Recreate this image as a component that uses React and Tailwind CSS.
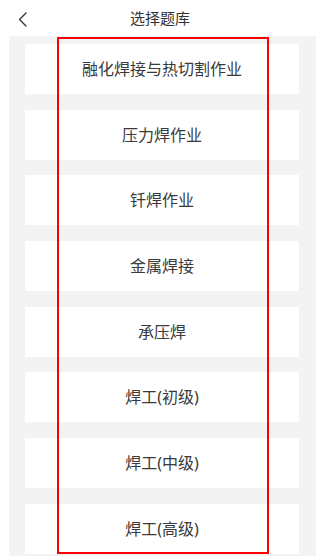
import React from "react";

const items = [
  "融化焊接与热切割作业",
  "压力焊作业",
  "钎焊作业",
  "金属焊接",
  "承压焊",
  "焊工(初级)",
  "焊工(中级)",
  "焊工(高级)",
];

export default function App() {
  return (
    <div
      className="relative w-[320px] h-[556px] overflow-hidden bg-white"
      style={{ fontFamily: '"Noto Sans", "Noto Sans CJK SC", sans-serif' }}
    >
      <div className="relative h-[36px] flex items-center justify-center">
        <svg
          className="absolute left-[18px] top-[12px]"
          width="10"
          height="15"
          viewBox="0 0 10 15"
          fill="none"
        >
          <path d="M8 1 L1.5 7.5 L8 14" stroke="#333" strokeWidth="1.4" strokeLinecap="round" strokeLinejoin="round" />
        </svg>
        <span className="text-[15px] leading-none text-[#333] mt-[1px]">选择题库</span>
      </div>
      <div className="ml-[9px] mr-[4px] h-[520px] bg-[#f3f3f3] pt-[8px] pl-[16px] pr-[17px] flex flex-col gap-[15.7px]">
        {items.map((t) => (
          <div
            key={t}
            className="h-[50px] shrink-0 bg-white flex items-center justify-center text-[16px] text-[#3a3a3a]"
          >
            {t}
          </div>
        ))}
      </div>
      <div className="absolute left-[57px] top-[37px] w-[212px] h-[517px] border-2 border-[#f00]" />
    </div>
  );
}
